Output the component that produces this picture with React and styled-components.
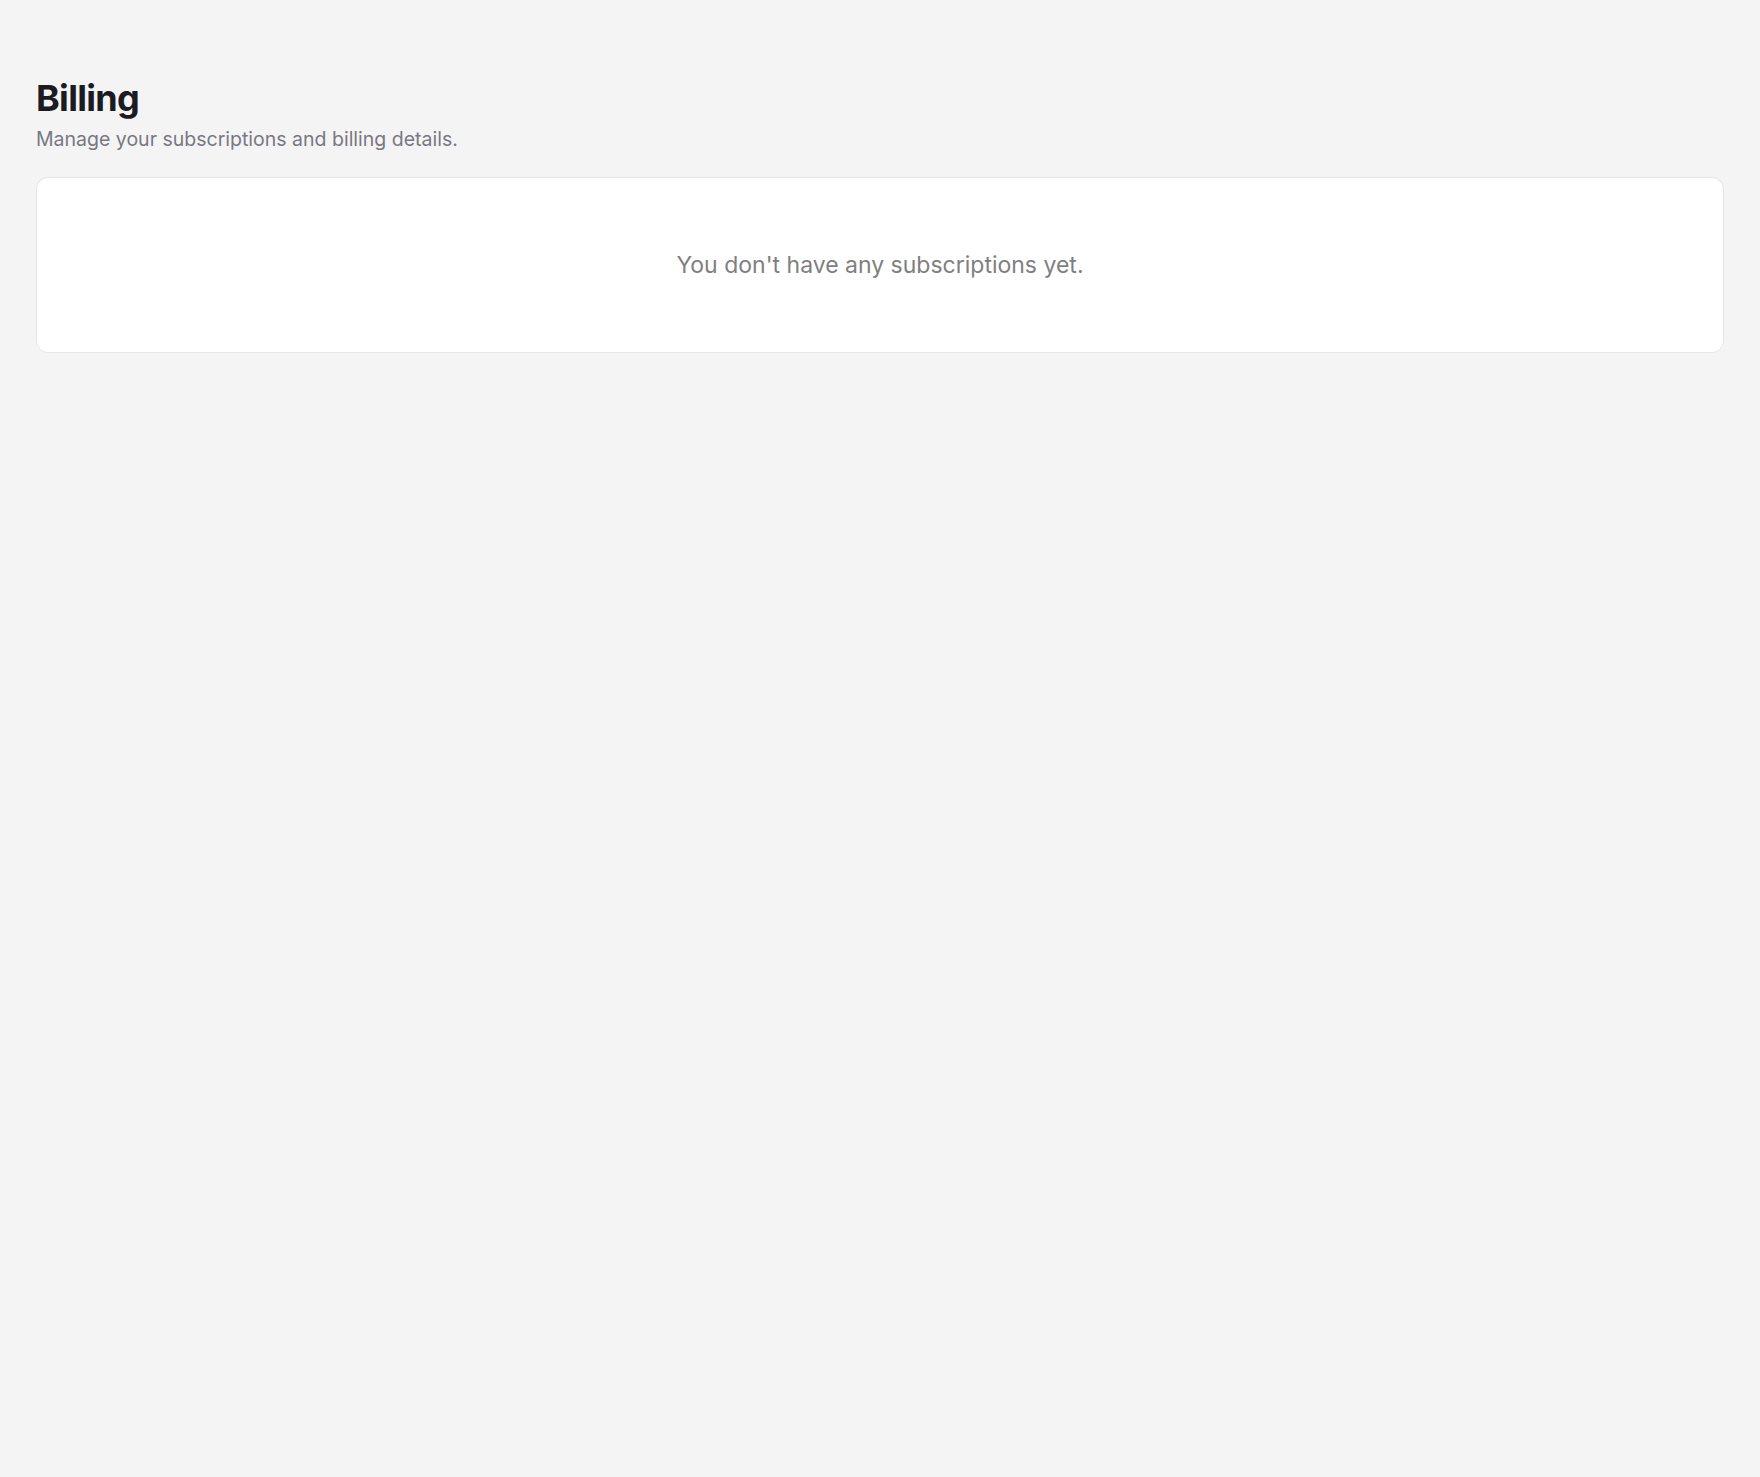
import React from 'react';
import styled, { createGlobalStyle } from 'styled-components';

const GlobalStyle = createGlobalStyle`
  html, body {
    margin: 0;
    padding: 0;
    background: #f4f4f5;
    font-family: Inter, 'Noto Sans', sans-serif;
  }
`;

const Page = styled.main`
  min-height: 1477px;
  box-sizing: border-box;
  padding: 78px 36px 0 36px;
  display: flex;
  flex-direction: column;
`;

const Header = styled.header`
  display: flex;
  flex-direction: column;
  gap: 8px;
  margin-bottom: 24px;
`;

const Title = styled.h1`
  margin: 0;
  font-size: 36px;
  line-height: 40px;
  font-weight: 700;
  letter-spacing: -0.02em;
  color: #1b1b22;
`;

const Subtitle = styled.p`
  margin: 0;
  font-size: 19.5px;
  line-height: 27px;
  font-weight: 400;
  color: #787882;
`;

const Card = styled.section`
  background: #ffffff;
  border: 1px solid #e6e6e8;
  border-radius: 12px;
  height: 176px;
  box-sizing: border-box;
  display: flex;
  align-items: center;
  justify-content: center;
`;

const EmptyText = styled.p`
  margin: 0;
  font-size: 23px;
  line-height: 30px;
  color: #7f7f7f;
`;

const Billing = () => {
  return (
    <React.Fragment>
      <GlobalStyle />
      <Page>
        <Header>
          <Title>Billing</Title>
          <Subtitle>Manage your subscriptions and billing details.</Subtitle>
        </Header>
        <Card>
          <EmptyText>You don't have any subscriptions yet.</EmptyText>
        </Card>
      </Page>
    </React.Fragment>
  );
};

export default Billing;
